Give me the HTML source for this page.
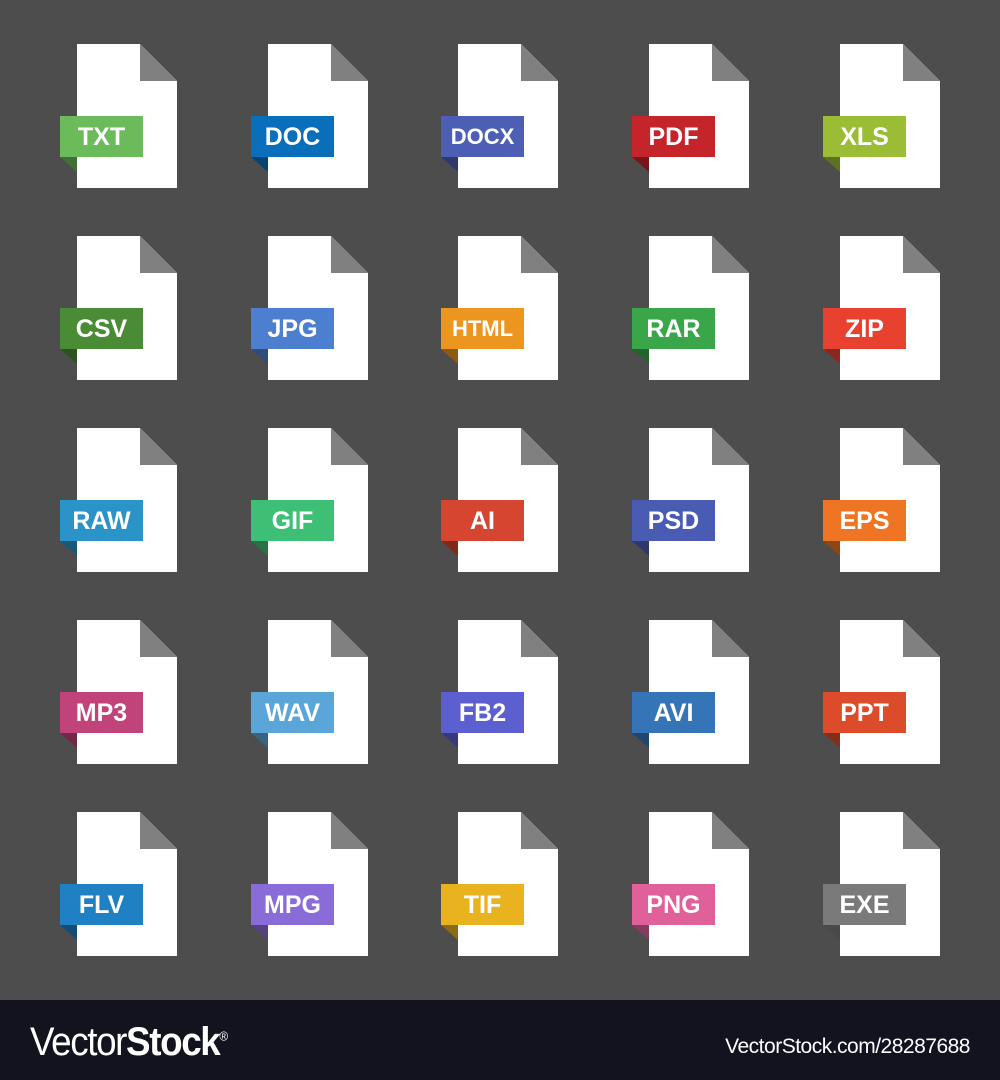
<!DOCTYPE html>
<html><head><style>
body{margin:0;width:1000px;height:1080px;background:#4d4d4d;position:relative;overflow:hidden;font-family:"Liberation Sans",sans-serif}
.f{position:absolute;width:117px;height:144px}
.pg{position:absolute;left:17px;top:0;width:100px;height:144px;background:#fff;clip-path:polygon(0 0,63px 0,100px 37px,100px 144px,0 144px)}
.fold{position:absolute;left:80px;top:0;width:37px;height:37px;background:#808080;clip-path:polygon(0 0,100% 100%,0 100%)}
.lb{position:absolute;left:0;top:72px;width:83px;height:41px;color:#fff;font-weight:bold;font-size:25px;line-height:42px;text-align:center}
.sh{position:absolute;left:0;top:113px;width:17px;height:15px;clip-path:polygon(0 0,100% 0,100% 100%);filter:brightness(.6)}
.ft{position:absolute;left:0;top:1000px;width:1000px;height:80px;background:#12131f;color:#fff}
</style></head><body>
<div id="g"></div>
<div class="ft">
<div style="position:absolute;left:30px;top:20px;font-size:40px;letter-spacing:-1.5px;transform:scaleX(.92);transform-origin:left"><span style="font-weight:normal">Vector</span><b>Stock</b><sup style="font-size:13px">®</sup></div>
<div style="position:absolute;right:30px;top:35px;font-size:21px;letter-spacing:-0.5px">VectorStock.com/28287688</div>
</div>
<script>
var d=[["TXT","#6cbb5a"],["DOC","#0a6fba"],["DOCX","#4d5fb5"],["PDF","#c4242a"],["XLS","#9bbd35"],
["CSV","#4a8b35"],["JPG","#4c7fcf"],["HTML","#ed961f"],["RAR","#3aa64a"],["ZIP","#e8412f"],
["RAW","#2a93c7"],["GIF","#3dbf75"],["AI","#d5452f"],["PSD","#4a5bb3"],["EPS","#ef7423"],
["MP3","#c0437a"],["WAV","#5aa6d9"],["FB2","#5c5fcf"],["AVI","#3674b8"],["PPT","#dc4b2a"],
["FLV","#1f80c3"],["MPG","#8a6cd9"],["TIF","#e9b21f"],["PNG","#e0619a"],["EXE","#7a7a7a"]];
var h="";d.forEach(function(e,i){var c=i%5,r=Math.floor(i/5);var x=60+Math.round(c*190.7),y=44+r*192;
var fs=e[0].length>3?22:25;
h+='<div class="f" style="left:'+x+'px;top:'+y+'px"><div class="pg"></div><div class="fold"></div><div class="sh" style="background:'+e[1]+'"></div><div class="lb" style="background:'+e[1]+';font-size:'+fs+'px">'+e[0]+'</div></div>';});
document.getElementById("g").innerHTML=h;
</script>
</body></html>
